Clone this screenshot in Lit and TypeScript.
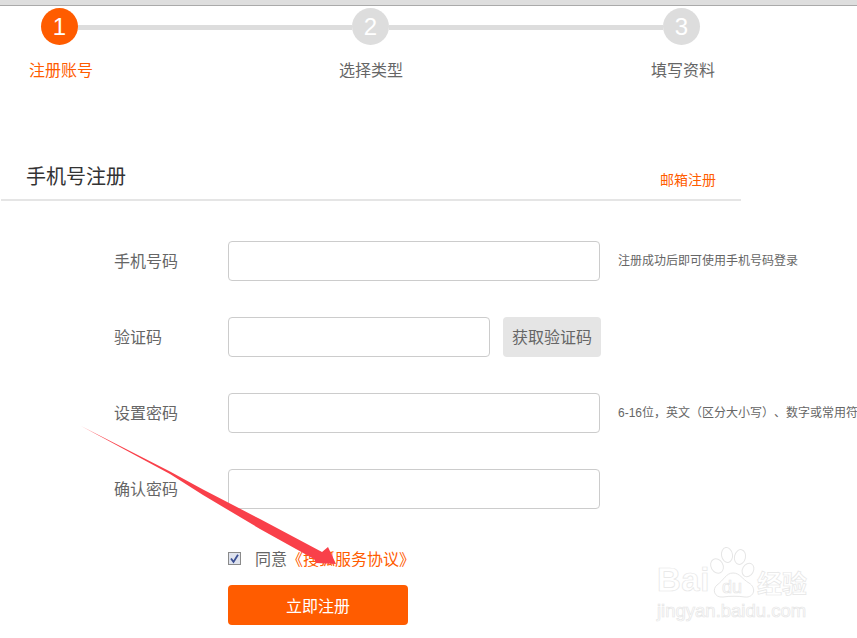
import { LitElement, html, css, svg } from "lit";
import { customElement } from "lit/decorators.js";

@customElement("app-root")
export class AppRoot extends LitElement {
  static styles = css`
    :host {
      display: block;
      position: relative;
      width: 857px;
      height: 638px;
      overflow: hidden;
      background: #fff;
      font-family: "Liberation Sans", "Noto Sans CJK SC", sans-serif;
      color: #666;
      font-size: 16px;
      text-spacing-trim: space-all;
    }
    .chrome { height: 5px; background: #dedede; border-bottom: 1px solid #aaa; }
    .stepper { display: flex; align-items: flex-start; padding: 2px 0 0 41px; }
    .dot {
      width: 37px; height: 37px; border-radius: 50%;
      background: #ddd; color: #fff;
      display: flex; align-items: center; justify-content: center;
      font-size: 24px; line-height: 37px;
      flex: none;
    }
    .dot.on { background: #ff5c00; }
    .track { width: 274px; height: 5px; margin-top: 17px; background: #ddd; flex: none; }
    .labels { display: flex; padding: 16px 0 0 29px; line-height: 20px; }
    .labels span { width: 64px; flex: none; white-space: nowrap; color: #666; }
    .labels span.on { color: #ff5c00; }
    .labels span + span { margin-left: 246px; }
    .labels span:last-child { margin-left: 248px; }
    .head {
      width: 740px; margin: 75px 0 0 1px; box-sizing: border-box;
      height: 45px; padding: 0 25px;
      display: flex; justify-content: space-between; align-items: flex-start;
      border-bottom: 2px solid #e5e5e5;
    }
    .head h2 { margin: 0; font-weight: 400; font-size: 20px; line-height: 28px; color: #333; padding-top: 7px; }
    .head a { font-size: 14px; line-height: 20px; color: #ff5c00; padding-top: 14px; }
    .form { display: flex; flex-direction: column; gap: 36px; margin-top: 40px; padding-left: 114px; }
    .row { display: flex; align-items: center; height: 40px; white-space: nowrap; }
    .row label { width: 114px; flex: none; color: #666; padding-bottom: 2px; }
    .box {
      width: 372px; height: 40px; box-sizing: border-box; flex: none;
      border: 1px solid #ccc; border-radius: 4px; background: #fff;
    }
    .box.short { width: 262px; }
    .hint { font-size: 12px; margin-left: 18px; color: #666; padding-bottom: 3px; }
    .code {
      width: 98px; height: 40px; margin-left: 13px; flex: none;
      background: #e5e5e5; border-radius: 4px; color: #666;
      display: flex; align-items: center; justify-content: center;
      box-sizing: border-box; padding-bottom: 2px;
    }
    .agree { display: flex; align-items: center; height: 20px; margin: 39px 0 0 228px; white-space: nowrap; }
    .check { width: 13px; height: 13px; flex: none; margin-right: 14px; display: block; }
    .agree a { color: #ff5c00; }
    .submit {
      width: 180px; height: 40px; margin: 17px 0 0 228px;
      background: #ff5c00; color: #fff; border-radius: 4px;
      display: flex; align-items: center; justify-content: center;
    }
    .arrow { position: absolute; left: 0; top: 0; pointer-events: none; }
    .mark { position: absolute; left: 657px; top: 546px; width: 155px; height: 75px; }
    .mark svg { position: absolute; left: 0; top: 0; }
    .mark span {
      position: absolute; white-space: nowrap; color: #fff;
      -webkit-text-stroke: 0.7px #e6e6e6;
    }
    .mark .bai { left: 0; top: 16px; font-size: 33px; line-height: 36px; font-weight: 700; letter-spacing: 0.5px; }
    .mark .du { left: 65px; top: 31px; font-size: 18px; line-height: 20px; }
    .mark .jy { left: 100px; top: 23px; font-size: 25px; line-height: 30px; font-weight: 700; }
    .mark .url { left: 0; top: 54px; font-size: 18.5px; line-height: 22px; }
  `;

  private row(label: string, hint = "") {
    return html`<div class="row">
      <label>${label}</label><div class="box"></div>
      ${hint ? html`<span class="hint">${hint}</span>` : ""}
    </div>`;
  }

  render() {
    return html`
      <div class="chrome"></div>
      <div class="stepper">
        <div class="dot on">1</div><div class="track"></div>
        <div class="dot">2</div><div class="track"></div>
        <div class="dot">3</div>
      </div>
      <div class="labels">
        <span class="on">注册账号</span><span>选择类型</span><span>填写资料</span>
      </div>
      <div class="head"><h2>手机号注册</h2><a>邮箱注册</a></div>
      <div class="form">
        ${this.row("手机号码", "注册成功后即可使用手机号码登录")}
        <div class="row">
          <label>验证码</label><div class="box short"></div>
          <div class="code">获取验证码</div>
        </div>
        ${this.row("设置密码", "6-16位，英文（区分大小写）、数字或常用符号")}
        ${this.row("确认密码")}
      </div>
      <div class="agree">
        <svg class="check" viewBox="0 0 13 13">
          <rect x="0.5" y="0.5" width="12" height="12" fill="#dfe3ee" stroke="#8a8a8a"/>
          <path d="M3 6.5 L5.5 10 L10 2.8" fill="none" stroke="#3b4f93" stroke-width="1.8"/>
        </svg>
        <span>同意</span><a>《搜狐服务协议》</a>
      </div>
      <div class="submit">立即注册</div>

      <div class="mark">
        <svg width="155" height="75" viewBox="0 0 155 75" fill="#fff" stroke="#e6e6e6" stroke-width="1">
          ${svg`
            <ellipse cx="60" cy="20" rx="6" ry="7.5" transform="rotate(-30 60 20)"/>
            <ellipse cx="70" cy="9" rx="5.5" ry="7.5" transform="rotate(-10 70 9)"/>
            <ellipse cx="83" cy="11" rx="5.5" ry="7.5" transform="rotate(12 83 11)"/>
            <ellipse cx="91" cy="24" rx="5.5" ry="7" transform="rotate(30 91 24)"/>
            <path d="M76 27 C83 27 85 33 92 37 C100 42 97 52 88 51 C82 50 72 50 66 51 C57 52 55 43 60 39 C67 34 69 27 76 27 Z"/>
          `}
        </svg>
        <span class="bai">Bai</span><span class="du">du</span><span class="jy">经验</span>
        <span class="url">jingyan.baidu.com</span>
      </div>

      <svg class="arrow" width="857" height="638" viewBox="0 0 857 638">
        <path d="M81 426 L170 471.5 L203 489.5 L260 519 L322 552 L328 547 L336 564 L316 563 L314 559 L260 529 L203 495 L170 474 Z" fill="#f9404a"/>
      </svg>
    `;
  }
}
